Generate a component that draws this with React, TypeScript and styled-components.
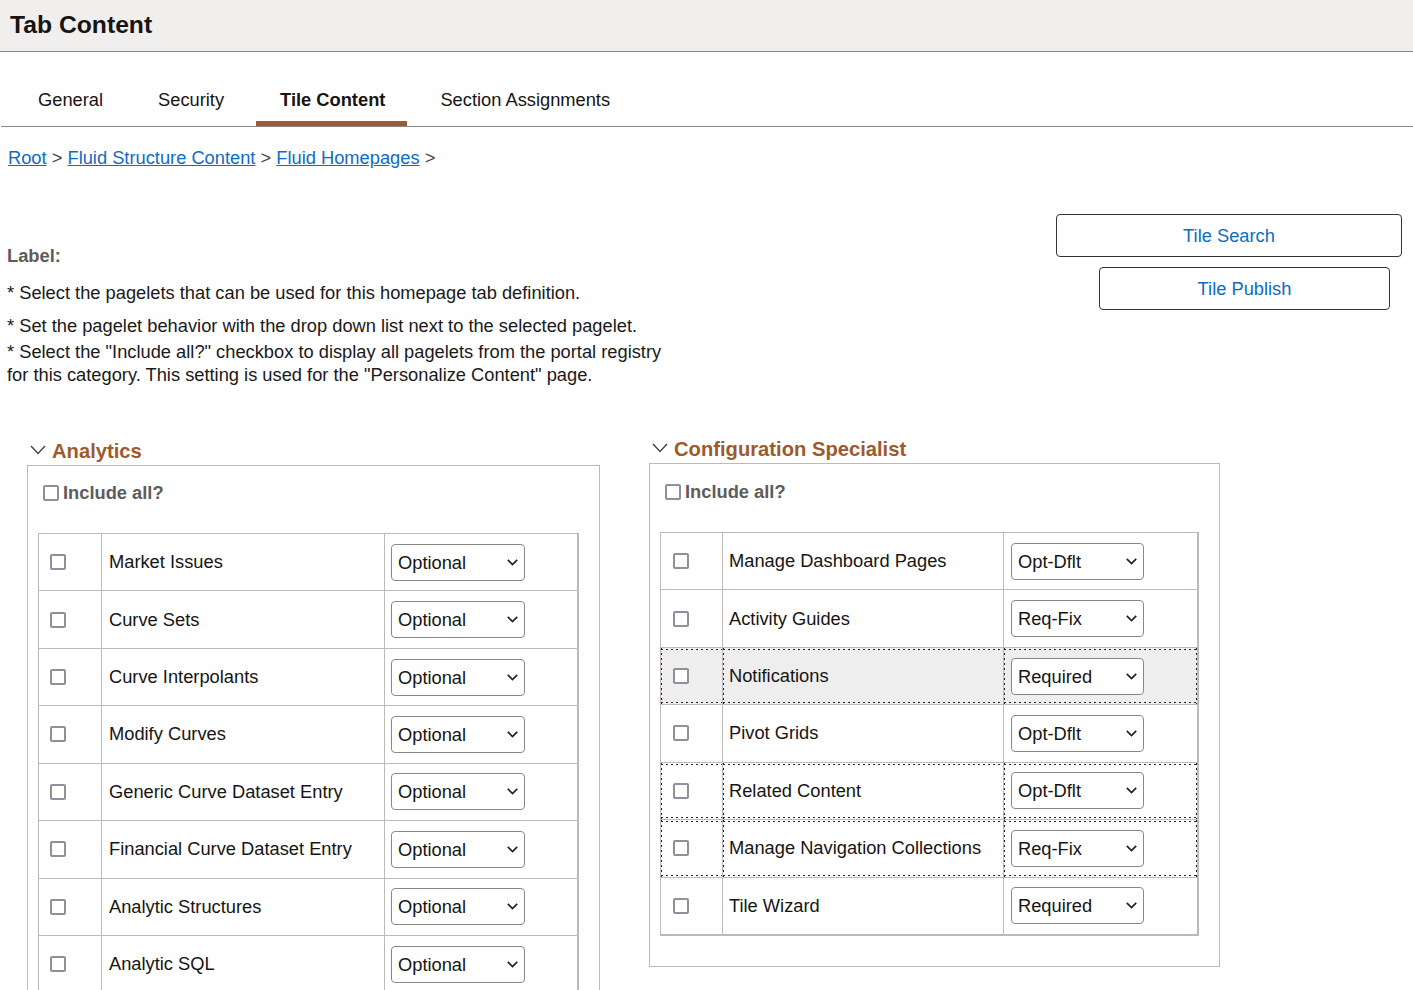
import React from 'react';
import styled, { createGlobalStyle, css } from 'styled-components';

const GlobalStyle = createGlobalStyle`
  html, body {
    margin: 0;
    padding: 0;
    height: 990px;
    overflow: hidden;
    background: #fff;
  }
  body {
    font: 400 18.3px "Liberation Sans", Arial, sans-serif;
    color: #1a1a1a;
  }
`;

const Page = styled.div`
  width: 1413px;
  height: 990px;
  overflow: hidden;
`;

const Header = styled.header`
  height: 51px;
  background: #f0efee;
  border-bottom: 1px solid #8a8885;
  padding-left: 10px;
  display: flex;
  align-items: center;
`;

const Title = styled.h1`
  margin: 0 0 1px;
  font: 700 24.7px "Liberation Sans", Arial, sans-serif;
  color: #161513;
`;

const TabBar = styled.nav`
  height: 74px;
  margin-left: 1px;
  padding-left: 14px;
  border-bottom: 1px solid #8a8885;
  display: flex;
  align-items: flex-end;
  gap: 10px;
`;

const Tab = styled.div<{ $active?: boolean }>`
  height: 53px;
  padding: 6px 22px 0 ${(props) => (props.$active ? 24 : 23)}px;
  box-sizing: border-box;
  display: flex;
  align-items: center;
  font-weight: ${(props) => (props.$active ? 700 : 400)};
  color: #161513;
  border-bottom: 5px solid ${(props) => (props.$active ? '#9e5a38' : 'transparent')};
`;

const Breadcrumbs = styled.div`
  padding: 20px 0 0 8px;
  height: 21px;
  line-height: 21px;
  color: #444;
`;

const Crumb = styled.a`
  color: #0f6cc4;
  text-decoration: underline;
`;

const Intro = styled.section`
  display: flex;
  justify-content: space-between;
  height: 271px;
  padding: 0 11px 0 7px;
`;

const IntroText = styled.div`
  width: 670px;
  padding-top: 77px;
`;

const Label = styled.div`
  font-weight: 700;
  color: #5c5c5c;
  line-height: 21px;
`;

const Note = styled.p<{ $top: number }>`
  margin: ${(props) => props.$top}px 0 0;
  line-height: 23px;
`;

const ButtonStack = styled.div`
  width: 346px;
  padding-top: 46px;
  display: flex;
  flex-direction: column;
  gap: 10px;
`;

const ActionButton = styled.button<{ $width: number; $indent: number }>`
  width: ${(props) => props.$width}px;
  margin-left: ${(props) => props.$indent}px;
  height: 43px;
  background: #fff;
  border: 1px solid #333;
  border-radius: 4px;
  font: 400 18.3px "Liberation Sans", Arial, sans-serif;
  color: #0f6cc4;
  padding: 0;
`;

const Columns = styled.div`
  display: flex;
  align-items: flex-start;
  padding-left: 27px;
  gap: 49px;
`;

const Group = styled.section<{ $width: number; $shift: number }>`
  width: ${(props) => props.$width}px;
  margin-top: ${(props) => props.$shift}px;
  flex: none;
`;

const GroupHeading = styled.div`
  height: 26px;
  box-sizing: border-box;
  padding: 0 0 2px 3px;
  display: flex;
  align-items: center;
  gap: 6px;
`;

const GroupTitle = styled.h2`
  margin: 0;
  font: 700 20.2px "Liberation Sans", Arial, sans-serif;
  color: #9e5a2d;
`;

const GroupBody = styled.div<{ $height?: number; $top: number }>`
  border: 1px solid #bdb9b4;
  box-sizing: border-box;
  padding: ${(props) => props.$top}px 20px 0 10px;
  height: ${(props) => (props.$height ? `${props.$height}px` : 'auto')};
`;

const IncludeAll = styled.label`
  display: flex;
  align-items: center;
  gap: 4px;
  padding-left: 5px;
  height: 22px;
  margin-bottom: 29px;
  font-weight: 700;
  color: #5c5c5c;
`;

const Check = styled.input.attrs({ type: 'checkbox' })`
  appearance: none;
  display: block;
  width: 16px;
  height: 16px;
  margin: 0;
  box-sizing: border-box;
  background: #fff;
  border: 2px solid #8f8f9d;
  border-radius: 2px;
  flex: none;
`;

const Grid = styled.table`
  width: 100%;
  border-collapse: separate;
  border-spacing: 0;
  table-layout: fixed;
  border-top: 1px solid #bdb9b4;
  border-left: 1px solid #bdb9b4;
  border-right: 2px solid #bdb9b4;
  border-bottom: 1px solid #bdb9b4;
`;

const Row = styled.tr<{ $height: number }>`
  height: ${(props) => props.$height}px;
`;

const dotsAcross = 'repeating-linear-gradient(90deg, #222 0 2px, transparent 2px 5px)';
const dotsDown = 'repeating-linear-gradient(180deg, #222 0 2px, transparent 2px 5px)';

const dottedEdges = css<{ $last?: boolean }>`
  background-image: ${dotsAcross}, ${dotsAcross}, ${dotsDown}, ${dotsDown};
  background-size: 100% 1px, 100% 1px, 1px 100%, ${(props) => (props.$last ? '1px 100%' : '0 0')};
  background-position: 0 1px, 0 calc(100% - 1px), 0 0, 100% 0;
  background-repeat: no-repeat;
`;

const Cell = styled.td<{ $dotted?: boolean; $shaded?: boolean; $last?: boolean; $pad: number }>`
  box-sizing: border-box;
  padding: 0 0 0 ${(props) => props.$pad}px;
  vertical-align: middle;
  border-bottom: 1px solid #bdb9b4;
  border-right: ${(props) => (props.$last ? 'none' : '1px solid #bdb9b4')};
  background-color: ${(props) => (props.$shaded ? '#eeeeee' : 'transparent')};
  color: #161513;
  ${(props) => props.$dotted && dottedEdges}
`;

const BehaviorWrap = styled.div<{ $width: number }>`
  position: relative;
  width: ${(props) => props.$width}px;
  height: 37px;
`;

const Behavior = styled.select`
  appearance: none;
  display: block;
  width: 100%;
  height: 100%;
  background-color: #fff;
  border: 1px solid #8a8885;
  border-radius: 4px;
  padding: 0 0 0 6px;
  font: 400 18.3px "Liberation Sans", Arial, sans-serif;
  color: #161513;
`;

const SelectArrow = styled.svg`
  position: absolute;
  right: 7px;
  top: 15px;
  pointer-events: none;
`;

const CollapseIcon = styled.svg`
  margin-bottom: 3px;
  flex: none;
`;

const Chevron = () => (
  <CollapseIcon width="16" height="10" viewBox="0 0 16 10" fill="none" stroke="#444" strokeWidth="1.4">
    <polyline points="1,1 8,8.5 15,1" />
  </CollapseIcon>
);

const Arrow = () => (
  <SelectArrow width="11" height="7" viewBox="0 0 11 7" fill="none" stroke="#222" strokeWidth="1.7">
    <polyline points="0.8,0.8 5.5,5.5 10.2,0.8" />
  </SelectArrow>
);

interface Item {
  name: string;
  value: string;
  dotted?: boolean;
  shaded?: boolean;
}

const analytics: Item[] = [
  { name: 'Market Issues', value: 'Optional' },
  { name: 'Curve Sets', value: 'Optional' },
  { name: 'Curve Interpolants', value: 'Optional' },
  { name: 'Modify Curves', value: 'Optional' },
  { name: 'Generic Curve Dataset Entry', value: 'Optional' },
  { name: 'Financial Curve Dataset Entry', value: 'Optional' },
  { name: 'Analytic Structures', value: 'Optional' },
  { name: 'Analytic SQL', value: 'Optional' },
];

const specialist: Item[] = [
  { name: 'Manage Dashboard Pages', value: 'Opt-Dflt' },
  { name: 'Activity Guides', value: 'Req-Fix' },
  { name: 'Notifications', value: 'Required', dotted: true, shaded: true },
  { name: 'Pivot Grids', value: 'Opt-Dflt' },
  { name: 'Related Content', value: 'Opt-Dflt', dotted: true },
  { name: 'Manage Navigation Collections', value: 'Req-Fix', dotted: true },
  { name: 'Tile Wizard', value: 'Required' },
];

const options = ['Optional', 'Opt-Dflt', 'Required', 'Req-Fix'];

interface PageletTableProps {
  items: Item[];
  columns: number[];
  pads: number[];
  selectWidth: number;
}

const PageletTable: React.FC<PageletTableProps> = ({ items, columns, pads, selectWidth }) => (
  <Grid>
    <colgroup>
      {columns.map((width) => (
        <col key={width} width={width} />
      ))}
    </colgroup>
    <tbody>
      {items.map((item) => (
        <Row key={item.name} $height={57.43}>
          <Cell $pad={pads[0]} $dotted={item.dotted} $shaded={item.shaded}>
            <Check />
          </Cell>
          <Cell $pad={pads[1]} $dotted={item.dotted} $shaded={item.shaded}>
            {item.name}
          </Cell>
          <Cell $pad={pads[2]} $dotted={item.dotted} $shaded={item.shaded} $last>
            <BehaviorWrap $width={selectWidth}>
              <Behavior defaultValue={item.value}>
                {options.map((option) => (
                  <option key={option}>{option}</option>
                ))}
              </Behavior>
              <Arrow />
            </BehaviorWrap>
          </Cell>
        </Row>
      ))}
    </tbody>
  </Grid>
);

const App: React.FC = () => (
  <Page>
    <GlobalStyle />
    <Header>
      <Title>Tab Content</Title>
    </Header>
    <TabBar>
      <Tab>General</Tab>
      <Tab>Security</Tab>
      <Tab $active>Tile Content</Tab>
      <Tab>Section Assignments</Tab>
    </TabBar>
    <Breadcrumbs>
      <Crumb>Root</Crumb> &gt; <Crumb>Fluid Structure Content</Crumb> &gt; <Crumb>Fluid Homepages</Crumb> &gt;
    </Breadcrumbs>
    <Intro>
      <IntroText>
        <Label>Label:</Label>
        <Note $top={15}>* Select the pagelets that can be used for this homepage tab definition.</Note>
        <Note $top={10}>* Set the pagelet behavior with the drop down list next to the selected pagelet.</Note>
        <Note $top={3}>
          * Select the "Include all?" checkbox to display all pagelets from the portal registry for this category.
          This setting is used for the "Personalize Content" page.
        </Note>
      </IntroText>
      <ButtonStack>
        <ActionButton $width={346} $indent={0}>Tile Search</ActionButton>
        <ActionButton $width={291} $indent={43}>Tile Publish</ActionButton>
      </ButtonStack>
    </Intro>
    <Columns>
      <Group $width={573} $shift={0}>
        <GroupHeading>
          <Chevron />
          <GroupTitle>Analytics</GroupTitle>
        </GroupHeading>
        <GroupBody $top={16}>
          <IncludeAll>
            <Check />
            Include all?
          </IncludeAll>
          <PageletTable items={analytics} columns={[63, 283, 192]} pads={[11, 7, 6]} selectWidth={134} />
        </GroupBody>
      </Group>
      <Group $width={571} $shift={-2}>
        <GroupHeading>
          <Chevron />
          <GroupTitle>Configuration Specialist</GroupTitle>
        </GroupHeading>
        <GroupBody $height={504} $top={17}>
          <IncludeAll>
            <Check />
            Include all?
          </IncludeAll>
          <PageletTable items={specialist} columns={[62, 281, 193]} pads={[12, 6, 7]} selectWidth={133} />
        </GroupBody>
      </Group>
    </Columns>
  </Page>
);

export default App;
